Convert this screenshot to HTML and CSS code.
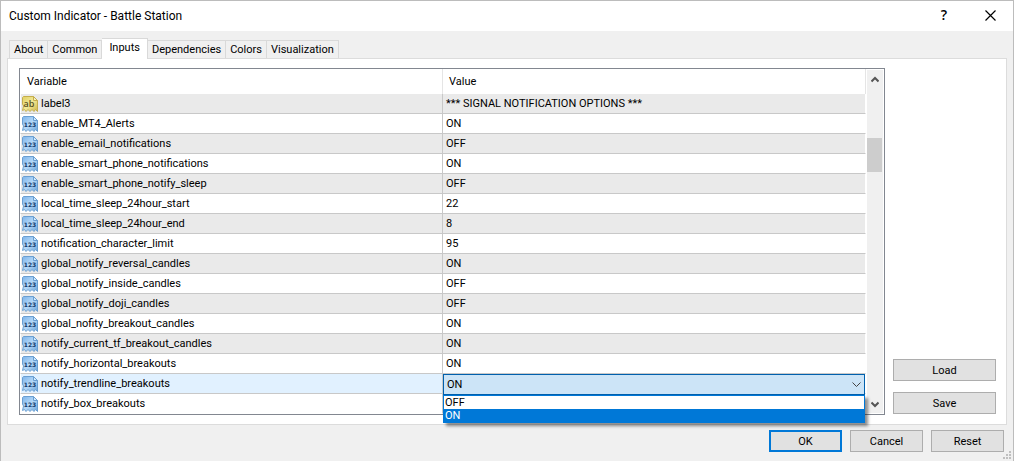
FILE: index.html
```html
<!DOCTYPE html>
<html lang="en">
<head>
<meta charset="utf-8">
<title>Custom Indicator - Battle Station</title>
<link rel="stylesheet" href="styles.css">
</head>
<body>
<svg class="defs" aria-hidden="true">
  <defs>
    <linearGradient id="blue" x1="0" y1="0" x2="1" y2="1"><stop offset="0" stop-color="#7db4ea"/><stop offset=".5" stop-color="#b4d8f8"/><stop offset="1" stop-color="#6fa6da"/></linearGradient>
    <linearGradient id="gold" x1="0" y1="0" x2="1" y2="1"><stop offset="0" stop-color="#e0cf62"/><stop offset=".5" stop-color="#f3ea98"/><stop offset="1" stop-color="#cdb54a"/></linearGradient>
    <symbol id="number" viewBox="0 0 16 16">
      <path d="M1.500.5h10l4 4v11l-2-2-1.500 2-2-2-2 2-2-2-2 2-1.500-2-2 1L1.500 10 .5 8V1.500z" fill="url(#blue)" stroke="#6a9fd2"/>
      <path d="M11.500.5v4h4z" fill="#d5eafc" stroke="#6a9fd2"/>
      <text x="8" y="11" text-anchor="middle" class="glyph-number">123</text>
    </symbol>
    <symbol id="string" viewBox="0 0 16 16">
      <path d="M1.500.5h10l4 4v11l-2-2-1.500 2-2-2-2 2-2-2-2 2-1.500-2-2 1L1.500 10 .5 8V1.500z" fill="url(#gold)" stroke="#c4ad4c"/>
      <path d="M11.500.5v4h4z" fill="#f8f2bd" stroke="#c4ad4c"/>
      <text x="7" y="11" text-anchor="middle" class="glyph-string">ab</text>
    </symbol>
  </defs>
</svg>
<main class="dialog">
  <header class="titlebar">
    <h1 class="title">Custom Indicator - Battle Station</h1>
    <button class="caption help" type="button" aria-label="Help">?</button>
    <button class="caption" type="button" aria-label="Close"><svg width="11" height="11" viewBox="0 0 11 11"><path d="M.5.5l10 10M10.500.5l-10 10" fill="none" stroke="#000" stroke-width="1.2"/></svg></button>
  </header>
  <nav class="tabs" role="tablist">
    <button class="tab" role="tab" type="button">About</button>
    <button class="tab" role="tab" type="button">Common</button>
    <button class="tab active" role="tab" type="button" aria-selected="true">Inputs</button>
    <button class="tab" role="tab" type="button">Dependencies</button>
    <button class="tab" role="tab" type="button">Colors</button>
    <button class="tab" role="tab" type="button">Visualization</button>
  </nav>
  <section class="panel">
    <div class="list">
      <table class="grid">
        <thead><tr><th>Variable</th><th>Value</th></tr></thead>
        <tbody>
          <tr><td><span class="name"><svg class="icon"><use href="#string"/></svg>label3</span></td><td>*** SIGNAL NOTIFICATION OPTIONS ***</td></tr>
          <tr><td><span class="name"><svg class="icon"><use href="#number"/></svg>enable_MT4_Alerts</span></td><td>ON</td></tr>
          <tr><td><span class="name"><svg class="icon"><use href="#number"/></svg>enable_email_notifications</span></td><td>OFF</td></tr>
          <tr><td><span class="name"><svg class="icon"><use href="#number"/></svg>enable_smart_phone_notifications</span></td><td>ON</td></tr>
          <tr><td><span class="name"><svg class="icon"><use href="#number"/></svg>enable_smart_phone_notify_sleep</span></td><td>OFF</td></tr>
          <tr><td><span class="name"><svg class="icon"><use href="#number"/></svg>local_time_sleep_24hour_start</span></td><td>22</td></tr>
          <tr><td><span class="name"><svg class="icon"><use href="#number"/></svg>local_time_sleep_24hour_end</span></td><td>8</td></tr>
          <tr><td><span class="name"><svg class="icon"><use href="#number"/></svg>notification_character_limit</span></td><td>95</td></tr>
          <tr><td><span class="name"><svg class="icon"><use href="#number"/></svg>global_notify_reversal_candles</span></td><td>ON</td></tr>
          <tr><td><span class="name"><svg class="icon"><use href="#number"/></svg>global_notify_inside_candles</span></td><td>OFF</td></tr>
          <tr><td><span class="name"><svg class="icon"><use href="#number"/></svg>global_notify_doji_candles</span></td><td>OFF</td></tr>
          <tr><td><span class="name"><svg class="icon"><use href="#number"/></svg>global_nofity_breakout_candles</span></td><td>ON</td></tr>
          <tr><td><span class="name"><svg class="icon"><use href="#number"/></svg>notify_current_tf_breakout_candles</span></td><td>ON</td></tr>
          <tr><td><span class="name"><svg class="icon"><use href="#number"/></svg>notify_horizontal_breakouts</span></td><td>ON</td></tr>
          <tr class="selected"><td><label class="name" for="trendline"><svg class="icon"><use href="#number"/></svg>notify_trendline_breakouts</label></td><td class="editing">
            <div class="combo">
              <select id="trendline" class="select"><option>OFF</option><option selected>ON</option></select>
              <svg class="chevron" width="9" height="6" viewBox="0 0 9 6"><path d="M.5.5l4 4 4-4" fill="none" stroke="#444"/></svg>
              <ul class="menu" role="listbox"><li class="option" role="option">OFF</li><li class="option current" role="option" aria-selected="true">ON</li></ul>
            </div>
          </td></tr>
          <tr><td><span class="name"><svg class="icon"><use href="#number"/></svg>notify_box_breakouts</span></td><td></td></tr>
        </tbody>
      </table>
      <div class="scrollbar">
        <button class="arrow" type="button" aria-label="Scroll up"><svg width="8" height="7" viewBox="0 0 8 7"><path d="M.5 5.500L4 2l3.500 3.500" fill="none" stroke="#555" stroke-width="2"/></svg></button>
        <div class="track"><div class="thumb"></div></div>
        <button class="arrow" type="button" aria-label="Scroll down"><svg width="8" height="7" viewBox="0 0 8 7"><path d="M.5 1.500L4 5l3.500-3.500" fill="none" stroke="#555" stroke-width="2"/></svg></button>
      </div>
    </div>
    <div class="side">
      <button class="button" type="button">Load</button>
      <button class="button" type="button">Save</button>
    </div>
  </section>
  <footer class="footer">
    <button class="button primary" type="button">OK</button>
    <button class="button" type="button">Cancel</button>
    <button class="button" type="button">Reset</button>
    <svg class="grip" width="8" height="8" viewBox="0 0 8 8" fill="#bfbfbf"><path d="M6 0h2v2H6zM3 3h2v2H3zM6 3h2v2H6zM0 6h2v2H0zM3 6h2v2H3zM6 6h2v2H6z"/></svg>
  </footer>
</main>
</body>
</html>
```
FILE: styles.css
```css
* { box-sizing: border-box; }
body { margin: 0; font-family: Roboto, "Liberation Sans", sans-serif; font-size: 11px; line-height: 14px; color: #000; }
button, select { font: inherit; color: inherit; margin: 0; }
.defs { position: absolute; width: 0; height: 0; }
.dialog { display: flex; flex-direction: column; min-height: 100vh; border: 1px solid #bcbcbc; background: #f0f0f0; }
.titlebar { display: flex; align-items: center; height: 30px; padding-left: 8px; background: #fff; }
.title { flex: 1; margin: 0; font-size: 12px; font-weight: 400; }
.caption { display: flex; align-items: center; justify-content: center; width: 46px; height: 30px; padding: 0 0 2px; border: 0; background: none; }
.help { font-family: "Open Sans", sans-serif; font-size: 14px; font-weight: 600; }
.tabs { display: flex; align-items: flex-end; height: 27px; padding-left: 8px; }
.tab { height: 18px; padding: 1px 4px 0; border: 1px solid #d9d9d9; border-bottom: 0; border-left: 0; background: #f0f0f0; white-space: nowrap; }
.tab:first-child { border-left: 1px solid #d9d9d9; }
.tab.active { height: 21px; margin-bottom: -1px; padding: 0 7px 2px; background: #fff; position: relative; }
.panel { flex: 1; display: flex; gap: 8px; margin: 0 6px; padding: 9px 10px 9px 11px; border: 1px solid #dcdcdc; background: #fff; }
.list { flex: 1; display: flex; border: 1px solid #828790; background: #fff; }
.grid { flex: 1; align-self: flex-start; table-layout: fixed; border-collapse: separate; border-spacing: 0; width: 0; }
.grid th { height: 25px; padding: 1px 6px 0; border-right: 1px solid #e5e5e5; text-align: left; font-weight: 400; }
.grid th:first-child { padding-left: 7px; }
.grid td { height: 20px; padding: 1px 3px 0; border-right: 1px solid #c8c8c8; border-bottom: 1px solid #c8c8c8; white-space: nowrap; }
.grid td:first-child { padding: 0 1px; border-left: 1px solid #fff; }
.grid td:last-child { border-right-color: #fff; }
.grid tr:last-child td { border-bottom-color: #fff; }
.grid tbody tr:nth-child(odd) { background: #eaeaea; }
.grid tbody tr.selected { background: #e1f1ff; }
.name { display: flex; align-items: center; gap: 3px; line-height: 16px; }
.icon { flex: none; width: 16px; height: 16px; }
.glyph-number { font: 700 6px "DejaVu Sans", sans-serif; fill: #123a6b; }
.glyph-string { font: 600 9px "Open Sans", sans-serif; fill: #57501f; }
.grid td.editing { padding: 0; }
.combo { position: relative; height: 19px; }
.select { position: absolute; top: 0; left: 0; width: 100%; height: 21px; padding: 0 3px; appearance: none; border: 1px solid #0060ad; border-radius: 0; outline: 0; background: #cce4f7; z-index: 1; }
.chevron { position: absolute; top: 8px; right: 4px; z-index: 2; }
.menu { position: absolute; top: 21px; left: 0; right: 0; z-index: 3; margin: 0; padding: 0; list-style: none; border: 1px solid #0078d7; background: #fff; box-shadow: 3px 3px 3px rgba(0, 0, 0, .45); }
.option { height: 13px; padding: 0 1px; line-height: 13px; }
.option.current { background: #0078d7; color: #fff; }
.scrollbar { display: flex; flex-direction: column; width: 17px; margin: 1px 1px 1px 0; border-left: 1px solid #fff; background: #f0f0f0; }
.arrow { display: flex; align-items: center; justify-content: center; height: 18px; padding: 0; border: 0; background: none; }
.track { flex: 1; padding-top: 50px; }
.thumb { height: 34px; margin-right: 1px; background: #cdcdcd; }
.side { display: flex; flex-direction: column; justify-content: flex-end; gap: 11px; width: 103px; padding-bottom: 1px; }
.button { height: 22px; padding: 1px 0 0; border: 1px solid #adadad; background: #e1e1e1; }
.footer { position: relative; display: flex; justify-content: flex-end; gap: 8px; padding: 5px 9px 9px; }
.footer .button { width: 73px; }
.footer .primary { border: 2px solid #0078d7; }
.grip { position: absolute; right: 2px; bottom: 2px; }
```
